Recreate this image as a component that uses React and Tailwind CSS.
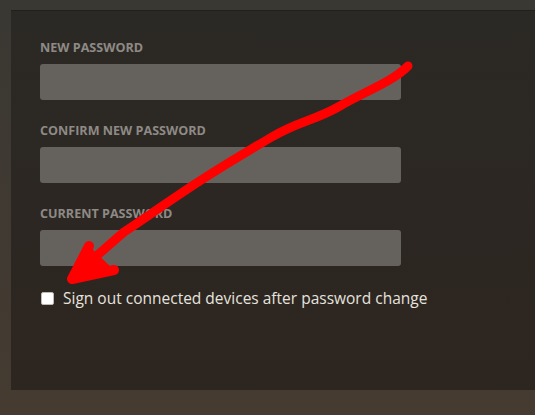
export default function App() {
    const fields = ['New Password', 'Confirm New Password', 'Current Password'];

    return (
        <div className="relative h-[415px] w-[535px] overflow-hidden bg-gradient-to-b from-[#3a3833] to-[#453b31] pl-[11px] pt-[10px] font-['Open_Sans',sans-serif]">
            {/* Panel */}
            <div className="h-[380px] w-[540px] border-t border-[#22201d] bg-gradient-to-b from-[#2b2925] to-[#2d2520] pl-[29px] pt-[29px]">
                {fields.map((label) => (
                    <div key={label} className="mb-[23px]">
                        <p className="mb-2 text-[12.6px] font-bold uppercase leading-4 text-[#8e8a85]">{label}</p>
                        <div className="h-9 w-[361px] rounded-[3px] bg-[#65625d]" />
                    </div>
                ))}

                {/* Checkbox */}
                <label className="-mt-[1px] flex items-center gap-[9px] pl-[1px]">
                    <span className="h-[13px] w-[13px] rounded-[2px] border border-[#bdbab5] bg-white" />
                    <span className="text-[15.5px] leading-5 text-[#e6e3de]">Sign out connected devices after password change</span>
                </label>
            </div>

            {/* Red annotation arrow */}
            <svg className="absolute left-0 top-0" width="535" height="415" viewBox="0 0 535 415">
                <path
                    d="M408 66 C 392 82, 368 90, 340 106 S 300 120, 270 138 S 222 166, 192 186 S 145 218, 124 232 L 77 273"
                    fill="none"
                    stroke="#ff0000"
                    strokeWidth="9"
                    strokeLinecap="round"
                    strokeLinejoin="round"
                />
                <path
                    d="M89 246 L 72 279 L 114 270"
                    fill="none"
                    stroke="#ff0000"
                    strokeWidth="10"
                    strokeLinecap="round"
                    strokeLinejoin="round"
                />
                <path d="M89 246 L 72 279 L 114 270 Z" fill="#ff0000" />
            </svg>
        </div>
    );
}
